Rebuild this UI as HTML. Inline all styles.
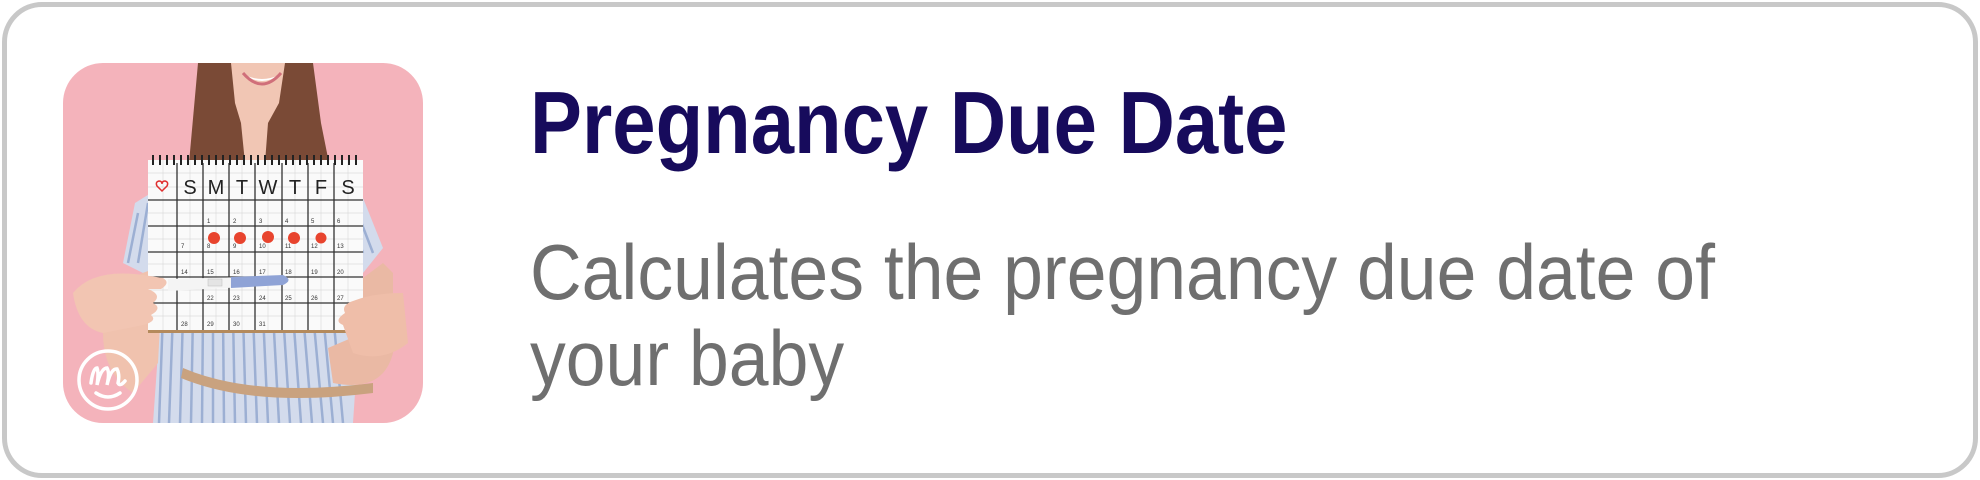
<!DOCTYPE html>
<html><head><meta charset="utf-8"><style>
html,body{margin:0;padding:0;background:#fff;}
body{width:1980px;height:480px;position:relative;overflow:hidden;font-family:"Liberation Sans",Arial,sans-serif;}
.card{position:absolute;left:2px;top:2px;width:1966px;height:466px;border:5px solid #c8c8c8;border-radius:40px;background:#fff;}
.img{position:absolute;left:63px;top:63px;width:360px;height:360px;border-radius:40px;overflow:hidden;}
.t{position:absolute;left:530px;top:72px;font-size:88px;font-weight:bold;color:#170b5c;white-space:nowrap;transform:scaleX(0.885);transform-origin:left top;}
.d{position:absolute;left:530px;top:229px;font-size:78px;line-height:86px;color:#6f6f6f;white-space:nowrap;transform:scaleX(0.917);transform-origin:left top;}
</style></head><body>
<div class="card"></div>
<div class="img">
<svg width="360" height="360" viewBox="0 0 360 360">
<rect width="360" height="360" fill="#f4b3bb"/>
<!-- hair -->
<path d="M135 0 L250 0 L258 60 L272 130 L262 170 L125 170 L126 100 Z" fill="#7a4a36"/>
<!-- face/neck -->
<path d="M168 0 L222 0 L216 40 L205 60 L202 100 L182 100 L178 60 L172 40 Z" fill="#f1c6b4"/>
<path d="M182 12 Q199 24 216 12 Q199 20 182 12 Z" fill="#fff"/>
<path d="M180 10 Q199 32 218 10" stroke="#d06f7a" stroke-width="3" fill="none"/>
<!-- dress -->
<path d="M60 200 L72 140 L120 110 L150 150 L230 150 L262 112 L300 135 L320 185 L300 210 L290 360 L90 360 L100 220 Z" fill="#d3dbec"/>
<g stroke="#9cafd3" stroke-width="2.5">
<line x1="100" y1="250" x2="96" y2="360"/><line x1="110" y1="250" x2="106" y2="360"/><line x1="120" y1="250" x2="117" y2="360"/><line x1="130" y1="250" x2="128" y2="360"/><line x1="140" y1="250" x2="139" y2="360"/><line x1="150" y1="250" x2="150" y2="360"/><line x1="160" y1="250" x2="161" y2="360"/><line x1="170" y1="250" x2="172" y2="360"/><line x1="180" y1="250" x2="183" y2="360"/><line x1="190" y1="250" x2="194" y2="360"/><line x1="200" y1="250" x2="205" y2="360"/><line x1="210" y1="250" x2="216" y2="360"/><line x1="220" y1="250" x2="227" y2="360"/><line x1="230" y1="250" x2="238" y2="360"/><line x1="240" y1="250" x2="249" y2="360"/><line x1="250" y1="250" x2="260" y2="360"/><line x1="260" y1="250" x2="270" y2="360"/><line x1="270" y1="250" x2="280" y2="360"/>
<line x1="265" y1="120" x2="290" y2="190"/><line x1="275" y1="120" x2="300" y2="190"/><line x1="285" y1="125" x2="310" y2="190"/><line x1="75" y1="150" x2="65" y2="200"/><line x1="85" y1="140" x2="75" y2="200"/>
</g>
<!-- belt -->
<path d="M120 305 Q190 335 310 320 L310 330 Q190 345 118 315 Z" fill="#c9a27f"/>
<!-- arms -->
<path d="M40 270 Q50 210 100 205 L95 300 L70 330 Q40 310 40 270 Z" fill="#f0c2ae"/>
<path d="M330 210 L320 200 L300 215 L300 270 L265 285 L270 320 Q320 330 330 290 Z" fill="#eab9a4"/>
<!-- calendar -->
<rect x="85" y="99" width="215" height="171" fill="#b48a5c"/>
<rect x="85" y="97" width="215" height="170" fill="#fafafa"/>
<g stroke="#dcdcdc" stroke-width="0.7">
<line x1="85" y1="110" x2="300" y2="110"/><line x1="85" y1="124" x2="300" y2="124"/><line x1="85" y1="150" x2="300" y2="150"/><line x1="85" y1="176" x2="300" y2="176"/><line x1="85" y1="201" x2="300" y2="201"/><line x1="85" y1="227" x2="300" y2="227"/><line x1="85" y1="253" x2="300" y2="253"/>
<line x1="100" y1="97" x2="100" y2="267"/><line x1="127" y1="97" x2="127" y2="267"/><line x1="153" y1="97" x2="153" y2="267"/><line x1="179" y1="97" x2="179" y2="267"/><line x1="205" y1="97" x2="205" y2="267"/><line x1="232" y1="97" x2="232" y2="267"/><line x1="258" y1="97" x2="258" y2="267"/><line x1="285" y1="97" x2="285" y2="267"/>
</g>
<g stroke="#333" stroke-width="1.3">
<line x1="85" y1="137" x2="300" y2="137"/><line x1="85" y1="163" x2="300" y2="163"/><line x1="85" y1="189" x2="300" y2="189"/><line x1="85" y1="214" x2="300" y2="214"/><line x1="85" y1="240" x2="300" y2="240"/>
<line x1="114" y1="100" x2="114" y2="267"/><line x1="140" y1="100" x2="140" y2="267"/><line x1="166" y1="100" x2="166" y2="267"/><line x1="192" y1="100" x2="192" y2="267"/><line x1="219" y1="100" x2="219" y2="267"/><line x1="245" y1="100" x2="245" y2="267"/><line x1="271" y1="100" x2="271" y2="267"/>
</g>
<g stroke="#222" stroke-width="2">
<line x1="90" y1="92" x2="90" y2="102"/><line x1="97" y1="92" x2="97" y2="102"/><line x1="104" y1="92" x2="104" y2="102"/><line x1="111" y1="92" x2="111" y2="102"/><line x1="118" y1="92" x2="118" y2="102"/><line x1="125" y1="92" x2="125" y2="102"/><line x1="132" y1="92" x2="132" y2="102"/><line x1="139" y1="92" x2="139" y2="102"/><line x1="146" y1="92" x2="146" y2="102"/><line x1="153" y1="92" x2="153" y2="102"/><line x1="160" y1="92" x2="160" y2="102"/><line x1="167" y1="92" x2="167" y2="102"/><line x1="174" y1="92" x2="174" y2="102"/><line x1="181" y1="92" x2="181" y2="102"/><line x1="188" y1="92" x2="188" y2="102"/><line x1="195" y1="92" x2="195" y2="102"/><line x1="202" y1="92" x2="202" y2="102"/><line x1="209" y1="92" x2="209" y2="102"/><line x1="216" y1="92" x2="216" y2="102"/><line x1="223" y1="92" x2="223" y2="102"/><line x1="230" y1="92" x2="230" y2="102"/><line x1="237" y1="92" x2="237" y2="102"/><line x1="244" y1="92" x2="244" y2="102"/><line x1="251" y1="92" x2="251" y2="102"/><line x1="258" y1="92" x2="258" y2="102"/><line x1="265" y1="92" x2="265" y2="102"/><line x1="272" y1="92" x2="272" y2="102"/><line x1="279" y1="92" x2="279" y2="102"/><line x1="286" y1="92" x2="286" y2="102"/><line x1="293" y1="92" x2="293" y2="102"/>
</g>
<g font-family="Liberation Sans,sans-serif" font-size="20" fill="#222" text-anchor="middle">
<text x="127" y="131">S</text><text x="153" y="131">M</text><text x="179" y="131">T</text><text x="205" y="131">W</text><text x="232" y="131">T</text><text x="258" y="131">F</text><text x="285" y="131">S</text>
</g>
<path d="M99 128 L94 123 Q92 119 96 118 Q99 118 99 121 Q99 118 102 118 Q106 119 104 123 Z" fill="none" stroke="#e03030" stroke-width="1.5"/>
<g font-family="Liberation Sans,sans-serif" font-size="6" fill="#333">
<text x="144" y="160">1</text><text x="170" y="160">2</text><text x="196" y="160">3</text><text x="222" y="160">4</text><text x="248" y="160">5</text><text x="274" y="160">6</text>
<text x="118" y="185">7</text><text x="144" y="185">8</text><text x="170" y="185">9</text><text x="196" y="185">10</text><text x="222" y="185">11</text><text x="248" y="185">12</text><text x="274" y="185">13</text>
<text x="118" y="211">14</text><text x="144" y="211">15</text><text x="170" y="211">16</text><text x="196" y="211">17</text><text x="222" y="211">18</text><text x="248" y="211">19</text><text x="274" y="211">20</text>
<text x="144" y="237">22</text><text x="170" y="237">23</text><text x="196" y="237">24</text><text x="222" y="237">25</text><text x="248" y="237">26</text><text x="274" y="237">27</text>
<text x="118" y="263">28</text><text x="144" y="263">29</text><text x="170" y="263">30</text><text x="196" y="263">31</text>
</g>
<g fill="#e8442e">
<circle cx="151" cy="175" r="6"/><circle cx="177" cy="175" r="6"/><circle cx="205" cy="174" r="6"/><circle cx="231" cy="175" r="6"/><circle cx="258" cy="175" r="5.5"/>
</g>
<!-- test stick -->
<path d="M105 216 L220 213 Q230 216 220 222 L105 228 Z" fill="#f4f4f4"/>
<path d="M168 214 L220 212 Q231 217 220 222 L168 225 Z" fill="#8fa3d6"/>
<rect x="145" y="216" width="14" height="7" fill="#e4e4e4" stroke="#bbb" stroke-width="0.5"/>
<!-- hands -->
<path d="M10 230 Q30 205 80 212 L100 215 Q108 220 98 226 L85 226 Q100 232 90 240 Q100 245 88 252 Q95 258 80 262 L40 270 Q15 265 10 230 Z" fill="#f2c5b2"/>
<path d="M340 230 Q310 230 290 238 Q278 242 282 250 Q270 258 280 262 L290 290 Q320 300 345 280 Z" fill="#efbea9"/>
<!-- logo -->
<circle cx="45" cy="317" r="29" fill="none" stroke="#fff" stroke-width="3.5"/>
<path d="M28 320 Q30 305 34 305 Q36 310 34 322 Q38 305 44 305 Q47 310 44 322 Q48 305 54 306 Q57 312 55 320 Q57 324 62 318" fill="none" stroke="#fff" stroke-width="3.5" stroke-linecap="round"/>
<path d="M33 330 Q45 338 57 330" fill="none" stroke="#fff" stroke-width="3.5" stroke-linecap="round"/>
</svg>
</div>
<div class="t">Pregnancy Due Date</div>
<div class="d">Calculates the pregnancy due date of<br>your baby</div>
</body></html>
